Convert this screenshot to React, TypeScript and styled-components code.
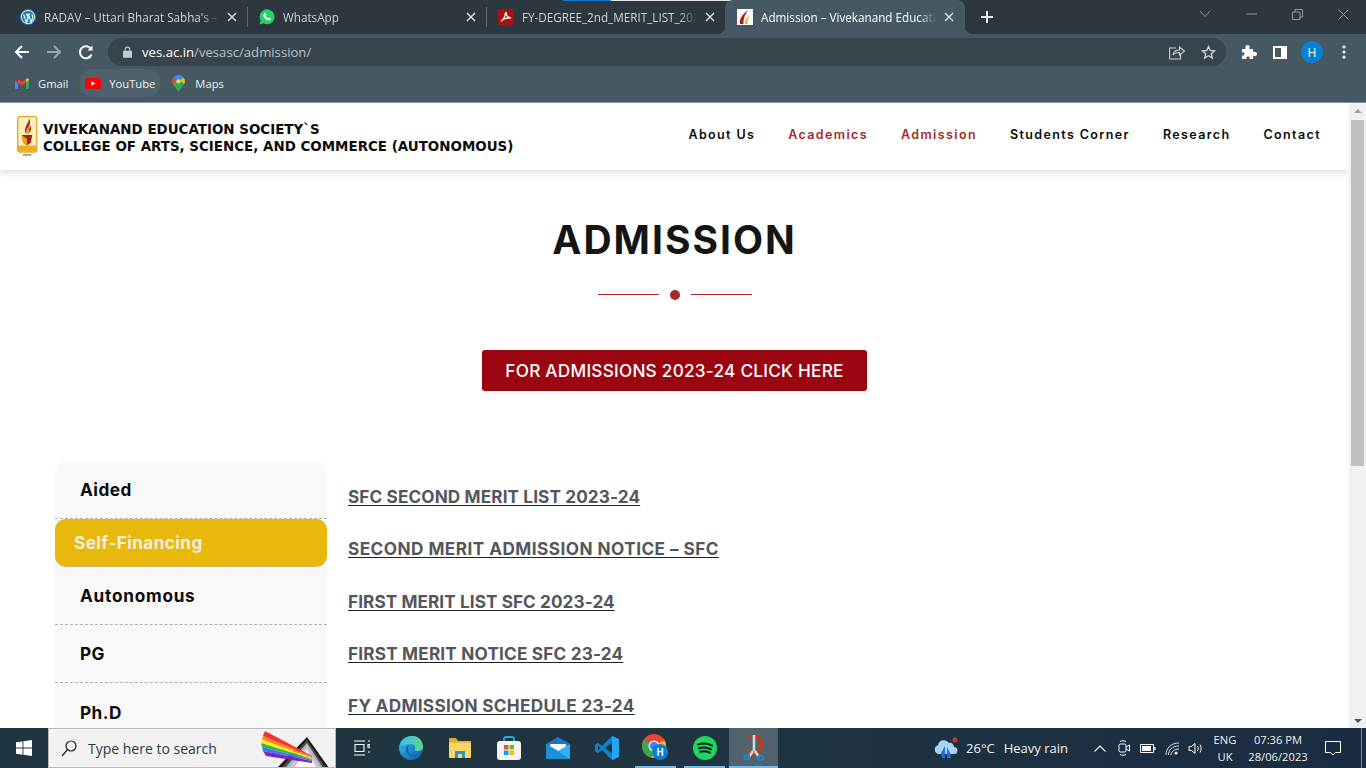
import React from "react";
import styled, { createGlobalStyle } from "styled-components";

const Global = createGlobalStyle`
  html, body { margin: 0; padding: 0; overflow: hidden; background: #fff; }
  * { box-sizing: border-box; }
`;
const UI = `"Open Sans", "Noto Sans", sans-serif`;
const WEB = `Inter, "Open Sans", sans-serif`;

const Screen = styled.div`
  width: 1366px; height: 768px; display: flex; flex-direction: column; overflow: hidden;
  font-family: ${UI};
`;
const TabStrip = styled.div`
  height: 34px; background: #2c373e; display: flex; align-items: stretch; padding-left: 9px; position: relative;
`;
const LoadBar = styled.div`
  position: absolute; top: 0; left: 563px; width: 241px; height: 1px; background: #e8e8e8;
  &::before { content: ""; position: absolute; left: 0; top: 0; width: 48px; height: 1px; background: #0a78d4; }
`;
const Tab = styled.div<{ $active?: boolean; $w: number }>`
  width: ${p => p.$w}px; height: 34px; display: flex; align-items: center; gap: 8px; flex: none;
  padding: 0 ${p => (p.$active ? 11 : 10)}px 0 ${p => (p.$active ? 12 : 11)}px;
  position: relative; font-size: 11.7px; color: ${p => (p.$active ? "#fff" : "#cfd4d7")};
  background: ${p => (p.$active ? "#465862" : "transparent")};
  border-radius: ${p => (p.$active ? "8px 8px 0 0" : "0")};
  ${p => p.$active ? `
    &::before, &::after { content: ""; position: absolute; bottom: 0; width: 8px; height: 8px; }
    &::before { left: -8px; background: radial-gradient(circle at 0 0, transparent 8px, #465862 8.5px); }
    &::after { right: -8px; background: radial-gradient(circle at 100% 0, transparent 8px, #465862 8.5px); }
  ` : ""}
`;
const TabSep = styled.div`
  width: 1px; height: 20px; background: #5f6b72; align-self: center; flex: none;
`;
const TabTitle = styled.span`
  flex: 1; min-width: 0; white-space: nowrap;
  -webkit-mask-image: linear-gradient(to right, #000 90%, transparent);
  mask-image: linear-gradient(to right, #000 90%, transparent);
`;
const TabClose = styled.span`
  flex: none; width: 10px; height: 10px; display: flex; color: #dfe3e5;
`;
const Fav = styled.span`flex: none; width: 16px; height: 16px; display: flex;`;
const NewTab = styled.div`
  width: 28px; display: flex; align-items: center; justify-content: center; margin-left: 8px; color: #e6e9eb;
`;
const WinControls = styled.div`
  margin-left: auto; display: flex; align-items: center; color: #8d979d; height: 28px;
`;
const WinBtn = styled.span<{ $w: number }>`
  width: ${p => p.$w}px; display: flex; justify-content: center;
`;
const Toolbar = styled.div`
  height: 34px; background: #465862; display: flex; align-items: center; padding: 2px 0 0 14px;
`;
const NavIcon = styled.span<{ $dim?: boolean; $end?: boolean }>`
  width: 16px; height: 16px; display: flex; margin-right: ${p => (p.$end ? 14 : 16)}px; color: ${p => (p.$dim ? "#9aa5ab" : "#fff")};
`;
const Omni = styled.div`
  width: 1118px; height: 28px; border-radius: 14px; background: #37444c; display: flex; align-items: center;
  padding: 0 10px 0 15px; font-size: 13.15px; color: #b9c1c6;
`;
const Lock = styled.span`width: 9px; height: 12px; display: flex; margin-right: 10px; color: #c4cbcf;`;
const Host = styled.span`color: #fff;`;
const OmniEnd = styled.div`margin-left: auto; display: flex; align-items: center; gap: 16px; color: #c9cfd3;`;
const ToolRight = styled.div`display: flex; align-items: center; margin-left: 15px; color: #fff;`;
const ToolSlot = styled.span<{ $w: number }>`
  width: ${p => p.$w}px; display: flex; justify-content: center; align-items: center;
`;
const PanelSlot = styled(ToolSlot)`padding-left: 2px;`;
const Avatar = styled.span`
  width: 22px; height: 22px; border-radius: 50%; background: #0a7fd0; color: #fff; font-size: 12px;
  display: flex; align-items: center; justify-content: center;
`;
const Bookmarks = styled.div`
  height: 35px; background: #465862; border-bottom: 1px solid #88939a; display: flex; align-items: center; padding: 0 0 4px 9px; gap: 5px;
  font-size: 11.2px; color: #eef0f1;
`;
const Bookmark = styled.div<{ $hover?: boolean; $gap: number }>`
  height: 28px; border-radius: 14px; display: flex; align-items: center; gap: ${p => p.$gap}px; padding: 0 6px;
  background: ${p => (p.$hover ? "#4f616b" : "transparent")};
`;

const Viewport = styled.div`
  flex: 1; min-height: 0; display: flex; background: #fff; overflow: hidden;
`;
const Page = styled.div`
  flex: 1; min-width: 0; font-family: ${WEB}; overflow: hidden;
`;
const Header = styled.div`
  height: 67px; background: #fff; box-shadow: 0 2px 8px rgba(0,0,0,.16); display: flex; align-items: center;
  padding: 0 29px 0 17px; position: relative;
`;
const Logo = styled.div`display: flex; align-items: center; gap: 5px;`;
const BrandText = styled.div`
  font-family: "DejaVu Sans", sans-serif; font-weight: 700; color: #0c0c0c; font-size: 13.43px; line-height: 17px;
  white-space: nowrap; padding-top: 3px;
`;
const Nav = styled.nav`
  margin-left: auto; display: flex; gap: 34px; align-items: center; padding-bottom: 4px;
`;
const NavLink = styled.a<{ $on?: boolean }>`
  font-size: 12.5px; font-weight: 600; letter-spacing: 1.38px; margin-right: -1px; color: ${p => (p.$on ? "#a5282c" : "#0b0b0b")}; white-space: nowrap;
`;
const Hero = styled.div`
  display: flex; flex-direction: column; align-items: center; padding-top: 45px;
`;
const Title = styled.h1`
  margin: 0; font-size: 39px; line-height: 50px; font-weight: 700; color: #151515; letter-spacing: 2px;
`;
const Divider = styled.div`
  margin-top: 24px; display: flex; align-items: center; gap: 11px; height: 12px;
`;
const Rule = styled.span`width: 61px; height: 1px; background: #b0272d; margin-bottom: 1px;`;
const Dot = styled.span`width: 10px; height: 10px; border-radius: 50%; background: #a5282c;`;
const Cta = styled.a`
  margin-top: 49px; width: 385px; height: 41px; border-radius: 3px; background: #9b0511; color: #fff;
  font-size: 17.2px; font-weight: 500; letter-spacing: .25px; display: flex; align-items: center; justify-content: center; white-space: nowrap;
`;
const Body = styled.div`
  margin-top: 70px; padding-left: 55px; display: flex; align-items: flex-start;
`;
const Side = styled.div`
  width: 272px; background: #f8f8f8; border-radius: 12px 12px 0 0; flex: none;
`;
const SideItem = styled.div<{ $h: number; $line?: boolean; $track?: number }>`
  height: ${p => p.$h}px; padding-left: 25px; display: flex; align-items: center;
  font-size: 17.2px; font-weight: 700; letter-spacing: ${p => p.$track ?? 0.45}px; color: #0c0c0c;
  border-bottom: ${p => (p.$line ? "1px dashed #b3b3b3" : "none")};
`;
const SideActive = styled.div`
  height: 48px; background: #e8b90b; border-radius: 11px; padding-left: 19px; display: flex; align-items: center;
  font-size: 17.2px; font-weight: 700; letter-spacing: .4px; color: #f3eee0; border-bottom: 1px dashed #b3b3b3;
`;
const Links = styled.div`
  padding: 26px 0 0 21px; display: flex; flex-direction: column; gap: 32px;
`;
const LinkRow = styled.a<{ $track: number }>`
  font-size: 17.2px; line-height: 20.3px; font-weight: 700; letter-spacing: ${p => p.$track}px; color: #54565c; text-decoration: underline; white-space: nowrap; width: max-content;
  text-decoration-color: #222; text-underline-offset: 2px;
`;
const ScrollTrack = styled.div`
  width: 17px; background: #f1f1f1; display: flex; flex-direction: column; align-items: center; flex: none; position: relative;
`;
const ScrollThumb = styled.div`
  position: absolute; top: 17px; left: 2px; width: 13px; height: 346px; background: #c1c1c1;
`;
const Arrow = styled.span<{ $down?: boolean }>`
  position: absolute; left: 5px; ${p => (p.$down ? "bottom: 5px" : "top: 6px")};
  width: 0; height: 0; border-left: 4px solid transparent; border-right: 4px solid transparent;
  ${p => (p.$down ? "border-top: 4px solid #505050" : "border-bottom: 4px solid #a3a3a3")};
`;

const Taskbar = styled.div`
  height: 40px; background: linear-gradient(90deg, #1f3640 0%, #1f3440 55%, #1b2b42 100%); display: flex; align-items: stretch; color: #fff; font-family: ${UI}; font-size: 12.5px; flex: none;
`;
const StartBtn = styled.div`
  width: 48px; display: flex; align-items: center; justify-content: center;
`;
const SearchBox = styled.div`
  width: 288px; background: #f2f2f2; border: 1px solid #b9b9b9; color: #2b3b44; font-size: 14px;
  display: flex; align-items: center; padding-left: 12px; gap: 11px; position: relative; overflow: hidden;
`;
const Rainbow = styled.svg`
  position: absolute; left: 209px; top: -1px;
`;
const TaskIcons = styled.div`
  display: flex; margin-left: 1px;
`;
const TaskIcon = styled.div<{ $running?: boolean; $active?: boolean }>`
  width: 49px; display: flex; align-items: center; justify-content: center; position: relative;
  background: ${p => (p.$active ? "#50626d" : "transparent")};
  ${p => (p.$running ? `&::after { content: ""; position: absolute; left: ${p.$active ? 0 : 4}px; right: ${p.$active ? 0 : 4}px; bottom: 0; height: 2px; background: #76b9ed; }` : "")}
`;
const Tray = styled.div`
  margin-left: auto; display: flex; align-items: center;
`;
const Weather = styled.div`
  display: flex; align-items: center; gap: 8px; font-size: 13px; margin-right: 20px; color: #f1f4f5;
`;
const WeatherDesc = styled.span`margin-left: 1px;`;
const TrayIcon = styled.span<{ $w: number }>`
  width: ${p => p.$w}px; display: flex; align-items: center; justify-content: center; color: #fff;
`;
const Lang = styled.div`
  width: 34px; text-align: center; font-size: 11.2px; line-height: 17px; color: #eef1f2;
`;
const Clock = styled.div`
  width: 66px; text-align: center; font-size: 11.2px; line-height: 17px; margin-left: 3px; color: #eef1f2;
`;
const Notify = styled.div`
  width: 44px; display: flex; align-items: center; justify-content: center; margin-right: 6px;
`;
const ShowDesktop = styled.div`
  width: 5px; height: 40px; border-left: 1px solid #7f8c98;
`;

const X = () => (
  <svg width="10" height="10" viewBox="0 0 10 10" stroke="currentColor" strokeWidth="1.4"><path d="M1 1l8 8M9 1l-8 8" /></svg>
);

const WpIcon = () => (
  <svg width="16" height="16" viewBox="0 0 16 16">
    <circle cx="8" cy="8" r="8" fill="#2a7fb0" />
    <circle cx="8" cy="8" r="6.6" fill="none" stroke="#fff" strokeWidth=".8" />
    <path d="M3.6 5.4l3 8 1.5-4.4-1.1-3.3M6.3 5.4h3.5M8.4 5.4l2.8 8 1.4-4.6c.5-1.6-.2-2.6-.8-3.4" fill="none" stroke="#fff" strokeWidth="1.1" />
  </svg>
);
const WaIcon = () => (
  <svg width="16" height="16" viewBox="0 0 16 16">
    <path d="M.6 15.4l1.1-3.9A7.4 7.4 0 1 1 4.6 14.3z" fill="#25d366" />
    <path d="M5.2 4.2c.5-.5 1-.4 1.2.1l.5 1.2c.1.3 0 .5-.5 1.1.5 1.1 1.4 2 2.7 2.6.6-.6.8-.8 1.1-.6l1.3.7c.4.2.4.7.1 1.2-.6.9-1.6 1.1-2.6.8-2.4-.8-3.9-2.3-4.5-4.3-.2-1-.1-2 .7-2.8z" fill="#fff" />
  </svg>
);
const PdfIcon = () => (
  <svg width="16" height="16" viewBox="0 0 16 16">
    <rect width="16" height="16" rx="2.5" fill="#a8130f" />
    <path d="M3 12.3c2-1.2 3.7-4 4.4-8 .2-1 1.1-.8 1 .1-.3 2.4 1.6 4.3 4.6 4.5-2.7-.2-6.2.3-8.7 1.8" fill="none" stroke="#fff" strokeWidth="1.3" />
  </svg>
);
const VesFav = () => (
  <svg width="16" height="16" viewBox="0 0 16 16">
    <rect width="16" height="16" fill="#fff" />
    <path d="M3 15C2 10 5 6 11 1 8 6 6 10 6.5 15z" fill="#a5201f" />
    <path d="M8 15c-.5-3 1-6 5-9-2 3-3 6-2.5 9z" fill="#ecb01f" />
  </svg>
);

const GmailIcon = () => (
  <svg width="14" height="11" viewBox="0 0 14 11">
    <path d="M0 2v8c0 .6.4 1 1 1h2V4.5z" fill="#4285f4" />
    <path d="M14 2v8c0 .6-.4 1-1 1h-2V4.5z" fill="#34a853" />
    <path d="M3 4.5L7 7.5l4-3V1L7 4 3 1z" fill="#ea4335" />
    <path d="M0 2c0-1.7 2-2.5 3-1v3.5z" fill="#c5221f" />
    <path d="M14 2c0-1.7-2-2.5-3-1v3.5z" fill="#fbbc04" />
  </svg>
);
const YtIcon = () => (
  <svg width="16" height="11" viewBox="0 0 16 11">
    <rect width="16" height="11" rx="2.5" fill="#f00" />
    <path d="M6.3 3.2l4.2 2.3-4.2 2.3z" fill="#fff" />
  </svg>
);
const MapsIcon = () => (
  <svg width="13" height="17" viewBox="0 0 12 16">
    <path d="M6 0a6 6 0 0 1 6 6c0 3-3 5-6 10C3 11 0 9 0 6a6 6 0 0 1 6-6z" fill="#34a853" />
    <path d="M1.8 1.8A6 6 0 0 1 6 0v4a2 2 0 0 0-1.5.7z" fill="#4285f4" />
    <path d="M0 6a6 6 0 0 1 1.8-4.2L4.5 4.7 .8 9C.3 8 0 7 0 6z" fill="#ea4335" />
    <path d="M6 0a6 6 0 0 1 5 2.7L7.5 4.7A2 2 0 0 0 6 4z" fill="#4285f4" />
    <path d="M11 2.7A6 6 0 0 1 12 6c0 1-.3 1.8-.8 2.6L7.5 4.7z" fill="#fbbc04" />
    <circle cx="6" cy="6" r="2" fill="#f4d56a" />
  </svg>
);

const CollegeCrest = () => (
  <svg width="21" height="42" viewBox="0 0 22 44">
    <rect x=".7" y=".7" width="20" height="37" rx="2" fill="#fbefc0" stroke="#e3ad1b" strokeWidth="1.4" />
    <path d="M9 18C7 13 11 9 13 3c2 4-1 8 0 10 1-1 1-2 1-3 2 3 0 7-2 8z" fill="#b32025" />
    <path d="M10 18c-1-3 1-5 2-7 1 2 1 5 0 7z" fill="#f3b21c" />
    <path d="M5 20h11l-1.5 8-4 3-4-3z" fill="#a41e22" />
    <path d="M5 20l5.5 4v7l-4-3z" fill="#e9a51a" />
    <rect x="1" y="31" width="19" height="6" fill="#e7b21e" />
    <rect x="6" y="40" width="9" height="1.5" fill="#888" />
  </svg>
);

const Spectrum = () => (
  <Rainbow width="74" height="40" viewBox="0 0 74 40">
    <path d="M49 9L71 40H19z" fill="#161616" />
    <path d="M49 12L68 40H23z" fill="#6b4226" />
    <path d="M49 15L65 40H27z" fill="#7bcbe8" />
    <path d="M49 18L62 40H31z" fill="#f2b8c6" />
    <path d="M49 22L58 40H36z" fill="#fff" />
    <path d="M7 3L54 28v1L5 8z" fill="#ff2d2d" />
    <path d="M5 8l49 21v1L4 11.5z" fill="#ff8c1a" />
    <path d="M4 11.5L54 30v1L3 15z" fill="#ffe81a" />
    <path d="M3 15l51 16v1L4 19z" fill="#38b54a" />
    <path d="M4 19l50 13v1L5 23z" fill="#3a78f2" />
    <path d="M5 23l49 10v2L8 28z" fill="#7a23c8" />
  </Rainbow>
);

const EdgeIcon = () => (
  <svg width="24" height="24" viewBox="0 0 24 24">
    <defs>
      <linearGradient id="edgeA" x1="0" y1="0" x2="1" y2="1"><stop offset="0" stopColor="#35c1f1" /><stop offset="1" stopColor="#0c59a4" /></linearGradient>
      <linearGradient id="edgeB" x1="0" y1="0" x2="1" y2="0"><stop offset="0" stopColor="#35c1f1" /><stop offset="1" stopColor="#5fd38a" /></linearGradient>
    </defs>
    <circle cx="12" cy="12" r="12" fill="url(#edgeA)" />
    <path d="M1 10C3 2 10 0 14 0c6 0 10 5 10 11 0 3-3 4-6 4-2 0-3-1-2-2 1-2 0-5-4-5-4 0-8 1-11 2z" fill="url(#edgeB)" />
    <path d="M10 9c-3 1-4 6-1 9 2 2 6 3 9 2-5 0-9-1-9-6 0-2 .5-4 1-5z" fill="#0c59a4" />
  </svg>
);
const FolderIcon = () => (
  <svg width="22" height="20" viewBox="0 0 22 20">
    <path d="M0 1a1 1 0 0 1 1-1h6l2 3h-9z" fill="#e5a92b" />
    <rect y="3" width="22" height="4" fill="#eab43a" />
    <rect y="5" width="22" height="15" rx="1" fill="#fcd667" />
    <rect x="6" y="13" width="10" height="7" fill="#2b8fd6" />
    <rect x="9" y="16" width="4" height="4" fill="#fcd667" />
  </svg>
);
const StoreIcon = () => (
  <svg width="24" height="24" viewBox="0 0 24 24">
    <path d="M7 6V3a2 2 0 0 1 2-2h6a2 2 0 0 1 2 2v3" fill="none" stroke="#1bb0e8" strokeWidth="1.8" />
    <rect y="5" width="24" height="19" rx="3" fill="#f4f4f4" />
    <rect x="7" y="9" width="4.5" height="4.5" fill="#f25022" />
    <rect x="12.5" y="9" width="4.5" height="4.5" fill="#7fba00" />
    <rect x="7" y="14.5" width="4.5" height="4.5" fill="#00a4ef" />
    <rect x="12.5" y="14.5" width="4.5" height="4.5" fill="#ffb900" />
  </svg>
);
const MailIcon = () => (
  <svg width="24" height="22" viewBox="0 0 24 22">
    <path d="M0 7L12 0l12 7v15H0z" fill="#1f74c4" />
    <path d="M4 7h16v7l-8 4-8-4z" fill="#f4f8fb" />
    <path d="M0 7l12 7 12-7v15H0z" fill="#2fb1ec" />
    <path d="M0 7l12 7 12 8H0z" fill="#1d8fdc" />
  </svg>
);
const VsIcon = () => (
  <svg width="24" height="24" viewBox="0 0 24 24">
    <path d="M17 0l7 3v18l-7 3-10-10-4 3-3-1.5v-7L3 7l4 3z" fill="#0f83cf" />
    <path d="M17 0l7 3v18l-7 3z" fill="#23a6ef" />
    <path d="M17 6.5L10 12l7 5.5z" fill="#1f3440" />
    <path d="M3 9.5L5.5 12 3 14.5z" fill="#1f3440" />
  </svg>
);
const ChromeIcon = () => (
  <svg width="28" height="28" viewBox="0 0 28 28">
    <circle cx="12" cy="12" r="12" fill="#ea4335" />
    <path d="M12 12L1.6 6A12 12 0 0 0 10 23.8z" fill="#34a853" />
    <path d="M12 12l10.4-6A12 12 0 0 1 10 23.8z" fill="#fbbc04" />
    <circle cx="12" cy="12" r="5.5" fill="#fff" />
    <circle cx="12" cy="12" r="4.3" fill="#4285f4" />
    <circle cx="18" cy="18" r="8" fill="#0a7fd0" />
    <text x="18" y="22" fontSize="10" fontWeight="700" fill="#e6f2fb" textAnchor="middle" fontFamily="Open Sans">H</text>
  </svg>
);
const SpotifyIcon = () => (
  <svg width="24" height="24" viewBox="0 0 24 24">
    <circle cx="12" cy="12" r="12" fill="#1ed760" />
    <path d="M5 8.5c5-1.5 10-1 14 1.2M6 12.3c4-1.1 8.5-.8 12 1M7 15.8c3.5-.8 7-.5 9.8.9" fill="none" stroke="#0e1a12" strokeWidth="2" strokeLinecap="round" />
  </svg>
);
const SnipIcon = () => (
  <svg width="24" height="26" viewBox="0 0 24 26">
    <path d="M7 2.5A8.5 8.5 0 1 1 5 15.5" fill="none" stroke="#cc3a0c" strokeWidth="3.2" />
    <path d="M12 0v16M11 16L7 22M13 16l4 6" stroke="#d4d6d8" strokeWidth="2.6" fill="none" />
    <circle cx="5" cy="22" r="2.5" fill="none" stroke="#2880d8" strokeWidth="1.9" />
    <circle cx="18.5" cy="23" r="2.5" fill="none" stroke="#2880d8" strokeWidth="1.9" />
  </svg>
);
const CloudIcon = () => (
  <svg width="24" height="24" viewBox="0 0 24 24">
    <circle cx="21" cy="4" r="2.5" fill="#c9302a" />
    <path d="M5 18a4.5 4.5 0 0 1-1-8.8A6 6 0 0 1 15 7a4 4 0 0 1 5 4 3.5 3.5 0 0 1 0 7z" fill="#a9d2f5" />
    <path d="M7 17l4-7v12H8zM13 11l3 6 1 5h-4z" fill="#1c6fe0" />
  </svg>
);

export default function App() {
  return (
    <Screen>
      <Global />
      <TabStrip>
        <LoadBar />
        <Tab $w={238}><Fav><WpIcon /></Fav><TabTitle>RADAV – Uttari Bharat Sabha's – </TabTitle><TabClose><X /></TabClose></Tab>
        <TabSep />
        <Tab $w={238}><Fav><WaIcon /></Fav><TabTitle>WhatsApp</TabTitle><TabClose><X /></TabClose></Tab>
        <TabSep />
        <Tab $w={238}><Fav><PdfIcon /></Fav><TabTitle>FY-DEGREE_2nd_MERIT_LIST_202</TabTitle><TabClose><X /></TabClose></Tab>
        <Tab $active $w={240}><Fav><VesFav /></Fav><TabTitle>Admission – Vivekanand Educatic</TabTitle><TabClose><X /></TabClose></Tab>
        <NewTab>
          <svg width="14" height="14" viewBox="0 0 14 14" stroke="currentColor" strokeWidth="2"><path d="M7 1v12M1 7h12" /></svg>
        </NewTab>
        <WinControls>
          <WinBtn $w={46}><svg width="12" height="8" viewBox="0 0 12 8" fill="none" stroke="currentColor"><path d="M1 1l5 5.5L11 1" /></svg></WinBtn>
          <WinBtn $w={46}><svg width="11" height="2" viewBox="0 0 11 2" stroke="currentColor"><path d="M0 1h11" /></svg></WinBtn>
          <WinBtn $w={46}><svg width="11" height="11" viewBox="0 0 11 11" fill="none" stroke="currentColor"><path d="M.5 3h7.5v7.5H.5zM3 3V.5h7.5V8H8" /></svg></WinBtn>
          <WinBtn $w={46}><svg width="11" height="11" viewBox="0 0 11 11" stroke="currentColor"><path d="M.5.5l10 10M10.5.5l-10 10" /></svg></WinBtn>
        </WinControls>
      </TabStrip>
      <Toolbar>
        <NavIcon>
          <svg width="16" height="16" viewBox="0 0 16 16" fill="none" stroke="currentColor" strokeWidth="2"><path d="M15 8H2M8 2L2 8l6 6" /></svg>
        </NavIcon>
        <NavIcon $dim>
          <svg width="16" height="16" viewBox="0 0 16 16" fill="none" stroke="currentColor" strokeWidth="2"><path d="M1 8h13M8 2l6 6-6 6" /></svg>
        </NavIcon>
        <NavIcon $end>
          <svg width="16" height="16" viewBox="0 0 16 16" fill="none" stroke="currentColor" strokeWidth="2"><path d="M13.5 10.500A6 6 0 1 1 13 5" /><path d="M14.5 1.5v5h-5z" fill="currentColor" stroke="none" /></svg>
        </NavIcon>
        <Omni>
          <Lock>
            <svg width="9" height="12" viewBox="0 0 10 13"><path d="M2.5 6V3.5a2.5 2.5 0 0 1 5 0V6" fill="none" stroke="currentColor" strokeWidth="1.3" /><rect y="5" width="10" height="8" rx="1" fill="currentColor" /></svg>
          </Lock>
          <span><Host>ves.ac.in</Host>/vesasc/admission/</span>
          <OmniEnd>
            <svg width="16" height="15" viewBox="0 0 16 15" fill="none" stroke="currentColor" strokeWidth="1.1"><path d="M7 3H.6v11h11V9" /><path d="M4 10c.5-3 3-5 6.5-5V2L15.5 6l-5 4V7.5C8 7.5 5.5 8 4 10z" /></svg>
            <svg width="15" height="15" viewBox="0 0 15 15" fill="none" stroke="currentColor" strokeWidth="1.4"><path d="M7.5 1.5l1.800 4 4.300.4-3.300 2.900 1 4.200-3.800-2.300-3.800 2.300 1-4.200L1.400 5.900l4.300-.4z" /></svg>
          </OmniEnd>
        </Omni>
        <ToolRight>
          <ToolSlot $w={16}>
            <svg width="16" height="16" viewBox="0 0 16 16" fill="currentColor"><path d="M1 5h3.5C4 2 5 1 6.5 1S9 2 8.5 5H12v3c3-.8 4 .5 4 2s-1 2.8-4 2v3H8.5c.5-2-.5-2.5-1.5-2.5S5 13 5.5 15H1v-3.5c2 .5 2.5-.5 2.5-1.5S3 8 1 8.5z" /></svg>
          </ToolSlot>
          <PanelSlot $w={44}>
            <svg width="14" height="13" viewBox="0 0 14 13"><path d="M0 0h14v13H0zM2 2v9h6V2z" fill="#fff" fillRule="evenodd" /></svg>
          </PanelSlot>
          <Avatar>H</Avatar>
          <ToolSlot $w={42}>
            <svg width="4" height="14" viewBox="0 0 4 14" fill="currentColor"><circle cx="2" cy="2" r="1.5" /><circle cx="2" cy="7" r="1.5" /><circle cx="2" cy="12" r="1.5" /></svg>
          </ToolSlot>
        </ToolRight>
      </Toolbar>
      <Bookmarks>
        <Bookmark $gap={9}><GmailIcon />Gmail</Bookmark>
        <Bookmark $hover $gap={8}><YtIcon />YouTube</Bookmark>
        <Bookmark $gap={10}><MapsIcon />Maps</Bookmark>
      </Bookmarks>
      <Viewport>
        <Page>
          <Header>
            <Logo>
              <CollegeCrest />
              <BrandText>VIVEKANAND EDUCATION SOCIETY`S<br />COLLEGE OF ARTS, SCIENCE, AND COMMERCE (AUTONOMOUS)</BrandText>
            </Logo>
            <Nav>
              <NavLink>About Us</NavLink>
              <NavLink $on>Academics</NavLink>
              <NavLink $on>Admission</NavLink>
              <NavLink>Students Corner</NavLink>
              <NavLink>Research</NavLink>
              <NavLink>Contact</NavLink>
            </Nav>
          </Header>
          <Hero>
            <Title>ADMISSION</Title>
            <Divider><Rule /><Dot /><Rule /></Divider>
            <Cta>FOR ADMISSIONS 2023-24 CLICK HERE</Cta>
          </Hero>
          <Body>
            <Side>
              <SideItem $h={58} $line>Aided</SideItem>
              <SideActive>Self-Financing</SideActive>
              <SideItem $h={58} $line $track={0.75}>Autonomous</SideItem>
              <SideItem $h={58} $line>PG</SideItem>
              <SideItem $h={58}>Ph.D</SideItem>
            </Side>
            <Links>
              <LinkRow $track={0.11}>SFC SECOND MERIT LIST 2023-24</LinkRow>
              <LinkRow $track={0.45}>SECOND MERIT ADMISSION NOTICE – SFC</LinkRow>
              <LinkRow $track={0.07}>FIRST MERIT LIST SFC 2023-24</LinkRow>
              <LinkRow $track={0.18}>FIRST MERIT NOTICE SFC 23-24</LinkRow>
              <LinkRow $track={0.29}>FY ADMISSION SCHEDULE 23-24</LinkRow>
            </Links>
          </Body>
        </Page>
        <ScrollTrack>
          <Arrow />
          <ScrollThumb />
          <Arrow $down />
        </ScrollTrack>
      </Viewport>
      <Taskbar>
        <StartBtn>
          <svg width="16" height="16" viewBox="0 0 16 16" fill="#fff"><path d="M0 2.3l6.5-.9v6.200H0zM7.400 1.300L16 0v7.600H7.400zM0 8.500h6.500v6.200L0 13.800zM7.400 8.500H16V16l-8.600-1.200z" /></svg>
        </StartBtn>
        <SearchBox>
          <svg width="16" height="17" viewBox="0 0 16 17" fill="none" stroke="#222" strokeWidth="1.2"><circle cx="10" cy="6" r="5" /><path d="M6.5 9.500L1 16" /></svg>
          Type here to search
          <Spectrum />
        </SearchBox>
        <TaskIcons>
          <TaskIcon>
            <svg width="16" height="16" viewBox="0 0 16 16" fill="none" stroke="#fff" strokeWidth="1.1"><path d="M0 1h11M0 15h11M1 4.500h9v7H1zM14 1h2M14 4.500h2v3h-2zM14 12h2" /></svg>
          </TaskIcon>
          <TaskIcon><EdgeIcon /></TaskIcon>
          <TaskIcon><FolderIcon /></TaskIcon>
          <TaskIcon><StoreIcon /></TaskIcon>
          <TaskIcon><MailIcon /></TaskIcon>
          <TaskIcon><VsIcon /></TaskIcon>
          <TaskIcon $running><ChromeIcon /></TaskIcon>
          <TaskIcon $running><SpotifyIcon /></TaskIcon>
          <TaskIcon $running $active><SnipIcon /></TaskIcon>
        </TaskIcons>
        <Tray>
          <Weather>
            <CloudIcon />
            <span>26°C</span>
            <WeatherDesc>Heavy rain</WeatherDesc>
          </Weather>
          <TrayIcon $w={24}><svg width="12" height="7" viewBox="0 0 12 7" fill="none" stroke="currentColor" strokeWidth="1.1"><path d="M.5 6.5L6 1l5.500 5.500" /></svg></TrayIcon>
          <TrayIcon $w={24}><svg width="12" height="16" viewBox="0 0 12 16" fill="none" stroke="currentColor"><rect x="1" y="4" width="7" height="8" rx="1.5" /><path d="M8 7l3.500-2v6L8 9M2 1.500c2-1 4-1 6 0M2 14.500c2 1 4 1 6 0" /></svg></TrayIcon>
          <TrayIcon $w={24}><svg width="16" height="9" viewBox="0 0 16 9"><path d="M.5.5h13v8H.5z" fill="none" stroke="#fff" /><rect x="2" y="2" width="9" height="5" fill="#fff" /><rect x="14" y="3" width="1.5" height="3" fill="#fff" /></svg></TrayIcon>
          <TrayIcon $w={24}><svg width="14" height="13" viewBox="0 0 14 13" fill="none" stroke="#d9dee1"><path d="M1 13C1 6 6 1 14 1M3.500 13C3.500 8 7 4 14 4M6 13c0-3 3-6 8-6" /><circle cx="11" cy="11" r="1.5" fill="#fff" stroke="none" /></svg></TrayIcon>
          <TrayIcon $w={24}><svg width="16" height="13" viewBox="0 0 16 13" fill="none" stroke="currentColor"><path d="M1 4.500h2.500L7 1.500v10L3.500 8.500H1zM9.500 4c1 1.500 1 3.500 0 5M12 2.500c1.500 2.500 1.500 5.500 0 8" /></svg></TrayIcon>
          <Lang>ENG<br />UK</Lang>
          <Clock>07:36 PM<br />28/06/2023</Clock>
          <Notify>
            <svg width="16" height="15" viewBox="0 0 16 15" fill="none" stroke="#fff"><path d="M.5.5h15v11h-5L8 14l-2.500-2.500h-5z" /></svg>
          </Notify>
          <ShowDesktop />
        </Tray>
      </Taskbar>
    </Screen>
  );
}
